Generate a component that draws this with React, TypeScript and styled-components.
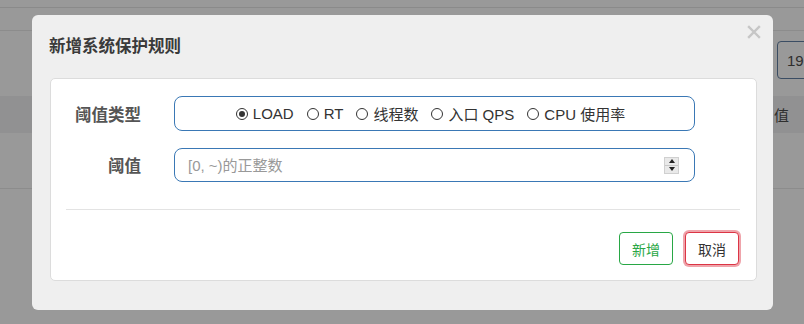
import React from "react";
import styled, { createGlobalStyle } from "styled-components";

const GlobalStyle = createGlobalStyle`
  html, body {
    margin: 0;
    padding: 0;
  }
  body {
    font-family: "Liberation Sans", Arial, "Noto Sans CJK SC", sans-serif;
    background: #999999;
  }
`;

const Page = styled.div`
  position: relative;
  width: 804px;
  height: 324px;
  overflow: hidden;
  background: #999999;
`;

const TopBar = styled.div`
  height: 7px;
  border-bottom: 1px solid #8a8a8a;
`;

const SubBar = styled.div`
  height: 22px;
  border-bottom: 1px solid #8c8c8c;
`;

const Toolbar = styled.div`
  display: flex;
  justify-content: flex-end;
  padding: 10px 0 0 0;
  height: 64px;
  box-sizing: border-box;
`;

const PageInput = styled.div`
  width: 40px;
  height: 38px;
  margin-right: -13px;
  box-sizing: border-box;
  border: 1px solid #3b4d63;
  border-radius: 4px;
  padding: 10px 0 0 9px;
  font-size: 15px;
  color: #2e2e2e;
`;

const TableHead = styled.div`
  display: flex;
  justify-content: flex-end;
  align-items: center;
  height: 37px;
  margin-top: 1px;
  background: #919192;
  font-size: 15px;
  color: #2e2e2e;
  padding-right: 15px;
  font-family: "Noto Sans CJK SC", sans-serif;
`;

const TableRow = styled.div`
  height: 55px;
  border-bottom: 1px solid #8c8c8c;
`;

const Overlay = styled.div`
  position: absolute;
  inset: 0;
  padding: 15px 31px 14px 32px;
  display: flex;
`;

const Modal = styled.div`
  flex: 1;
  display: flex;
  flex-direction: column;
  background: #efefef;
  border-radius: 6px;
`;

const Header = styled.div`
  position: relative;
  display: flex;
  align-items: center;
  height: 63px;
  padding: 0 17px 4px 17px;
  box-sizing: border-box;
`;

const Title = styled.h4`
  margin: 0;
  font-family: "Noto Sans CJK SC", sans-serif;
  font-size: 16.5px;
  font-weight: 700;
  color: #3a3a3a;
`;

const Close = styled.button`
  position: absolute;
  right: 12px;
  top: 10px;
  width: 14px;
  height: 14px;
  padding: 0;
  border: 0;
  background: none;
  display: flex;
`;

const Card = styled.div`
  margin: 0 16px 29px 18px;
  flex: 1;
  background: #ffffff;
  border: 1px solid #dcdcdc;
  border-radius: 5px;
  padding: 17px 0 0 0;
  display: flex;
  flex-direction: column;
`;

const FormRow = styled.div<{ $gap?: number }>`
  display: grid;
  grid-template-columns: 90px 1fr;
  column-gap: 33px;
  align-items: center;
  padding-right: 61px;
  margin-bottom: ${(p) => p.$gap ?? 0}px;
`;

const Label = styled.label`
  text-align: right;
  font-family: "Noto Sans CJK SC", sans-serif;
  font-size: 16.5px;
  font-weight: 700;
  color: #555555;
`;

const RadioBox = styled.div`
  height: 35px;
  box-sizing: border-box;
  border: 1px solid #3a78b5;
  border-radius: 8px;
  display: flex;
  align-items: center;
  justify-content: center;
  gap: 13px;
  padding-right: 8px;
`;

const RadioItem = styled.span`
  display: inline-flex;
  align-items: center;
  gap: 5px;
  font-family: "Liberation Sans", Arial, "Noto Sans CJK SC", sans-serif;
  font-size: 15px;
  color: #333333;
`;

const Circle = styled.span<{ $checked?: boolean }>`
  width: 12px;
  height: 12px;
  box-sizing: border-box;
  border-radius: 50%;
  border: 1px solid #333333;
  display: inline-flex;
  align-items: center;
  justify-content: center;
  &::after {
    content: "";
    width: 6px;
    height: 6px;
    border-radius: 50%;
    background: ${(p) => (p.$checked ? "#333333" : "transparent")};
  }
`;

const InputBox = styled.div`
  height: 34px;
  box-sizing: border-box;
  border: 1px solid #3a78b5;
  border-radius: 8px;
  display: flex;
  align-items: center;
  padding: 0 15px 0 13px;
`;

const TextInput = styled.input`
  flex: 1;
  border: 0;
  outline: none;
  padding: 0;
  background: transparent;
  font-family: "Liberation Sans", Arial, "Noto Sans CJK SC", sans-serif;
  font-size: 15px;
  color: #333;
  &::placeholder {
    color: #999999;
  }
`;

const Spinner = styled.span`
  width: 15px;
  height: 17px;
  box-sizing: border-box;
  display: flex;
  flex-direction: column;
  background: #e9e9e9;
  border: 1px solid #d0d0d0;
`;

const SpinHalf = styled.span<{ $down?: boolean }>`
  flex: 1;
  display: flex;
  align-items: center;
  justify-content: center;
  border-top: ${(p) => (p.$down ? "1px solid #c8c8c8" : "0")};
  &::after {
    content: "";
    border-left: 3px solid transparent;
    border-right: 3px solid transparent;
    ${(p) =>
      p.$down ? "border-top: 4px solid #222;" : "border-bottom: 4px solid #222;"}
  }
`;

const Divider = styled.hr`
  margin: 27px 16px 0 15px;
  border: 0;
  border-top: 1px solid #e3e3e3;
`;

const Footer = styled.div`
  display: flex;
  justify-content: flex-end;
  gap: 12px;
  padding: 22px 17px 0 0;
`;

const Button = styled.button<{ $variant: "success" | "danger" }>`
  width: 54px;
  height: 33px;
  box-sizing: border-box;
  border-radius: 4px;
  background: #ffffff;
  font-family: "Noto Sans CJK SC", sans-serif;
  font-size: 14px;
  padding: 0;
  border: 1px solid ${(p) => (p.$variant === "success" ? "#28a745" : "#dc3545")};
  color: ${(p) => (p.$variant === "success" ? "#28a745" : "#333333")};
  box-shadow: ${(p) =>
    p.$variant === "danger" ? "0 0 0 2px rgba(220, 53, 69, 0.45)" : "none"};
`;

const radios = [
  { label: "LOAD", checked: true },
  { label: "RT" },
  { label: "线程数" },
  { label: "入口 QPS" },
  { label: "CPU 使用率" },
];

export default function App() {
  return (
    <Page>
      <GlobalStyle />
      <TopBar />
      <SubBar />
      <Toolbar>
        <PageInput>19</PageInput>
      </Toolbar>
      <TableHead>值</TableHead>
      <TableRow />
      <Overlay>
        <Modal>
          <Header>
            <Title>新增系统保护规则</Title>
            <Close aria-label="close">
              <svg width="14" height="14" viewBox="0 0 14 14">
                <path
                  d="M2 2 L12 12 M12 2 L2 12"
                  stroke="#c6c6c6"
                  strokeWidth="2.4"
                  strokeLinecap="square"
                />
              </svg>
            </Close>
          </Header>
          <Card>
            <FormRow $gap={17}>
              <Label>阈值类型</Label>
              <RadioBox>
                {radios.map((r) => (
                  <RadioItem key={r.label}>
                    <Circle $checked={r.checked} />
                    {r.label}
                  </RadioItem>
                ))}
              </RadioBox>
            </FormRow>
            <FormRow>
              <Label>阈值</Label>
              <InputBox>
                <TextInput placeholder="[0, ~)的正整数" />
                <Spinner>
                  <SpinHalf />
                  <SpinHalf $down />
                </Spinner>
              </InputBox>
            </FormRow>
            <Divider />
            <Footer>
              <Button $variant="success">新增</Button>
              <Button $variant="danger">取消</Button>
            </Footer>
          </Card>
        </Modal>
      </Overlay>
    </Page>
  );
}
